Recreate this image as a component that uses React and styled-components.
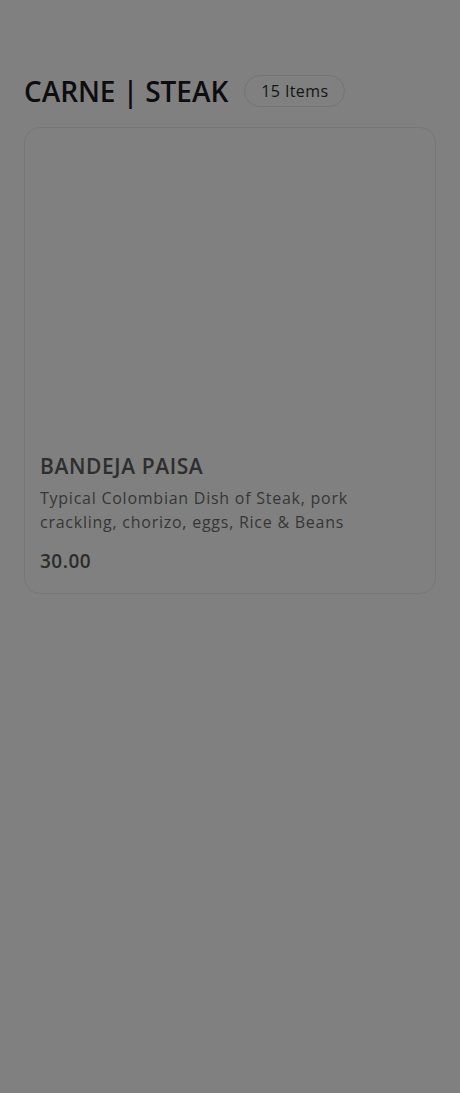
import styled, { createGlobalStyle } from 'styled-components'

const GlobalStyle = createGlobalStyle`
    body {
        margin: 0;
        background: #808080;
        font-family: "Open Sans", "Liberation Sans", sans-serif;
    }
`

const Page = styled.main`
    min-height: 1093px;
    padding: 74px 24px 24px;
    box-sizing: border-box;
`

const SectionHeader = styled.div`
    display: flex;
    align-items: center;
    gap: 16px;
    margin-bottom: 19px;
`

const SectionTitle = styled.h2`
    margin: 0;
    font-size: 28px;
    font-weight: 600;
    letter-spacing: -0.05px;
    color: #0d0d0d;
    line-height: 34px;
`

const CountBadge = styled.span`
    display: inline-flex;
    align-items: center;
    height: 30px;
    padding: 0 16px;
    border: 1px solid #747474;
    border-radius: 999px;
    font-size: 16px;
    color: #151515;
    letter-spacing: 0.4px;
`

const Card = styled.article`
    border: 1px solid #777777;
    border-radius: 16px;
    overflow: hidden;
`

const CardImage = styled.div`
    height: 318px;
`

const CardBody = styled.div`
    display: flex;
    flex-direction: column;
    padding: 6px 15px 19px;
`

const ItemName = styled.h3`
    margin: 0 0 6px;
    font-size: 21px;
    font-weight: 600;
    line-height: 28px;
    letter-spacing: 0.6px;
    color: #2e2e2e;
`

const ItemDescription = styled.p`
    margin: 0 0 14px;
    font-size: 16px;
    line-height: 24px;
    color: #363636;
    letter-spacing: 0.75px;
`

const ItemPrice = styled.span`
    font-size: 19px;
    font-weight: 600;
    line-height: 26px;
    letter-spacing: 0.5px;
    color: #2c2c2c;
`

export default function App() {
    return (
        <>
            <GlobalStyle />
            <Page>
                <SectionHeader>
                    <SectionTitle>CARNE | STEAK</SectionTitle>
                    <CountBadge>15 Items</CountBadge>
                </SectionHeader>
                <Card>
                    <CardImage />
                    <CardBody>
                        <ItemName>BANDEJA PAISA</ItemName>
                        <ItemDescription>
                            Typical Colombian Dish of Steak, pork crackling, chorizo, eggs, Rice &amp; Beans
                        </ItemDescription>
                        <ItemPrice>30.00</ItemPrice>
                    </CardBody>
                </Card>
            </Page>
        </>
    )
}
